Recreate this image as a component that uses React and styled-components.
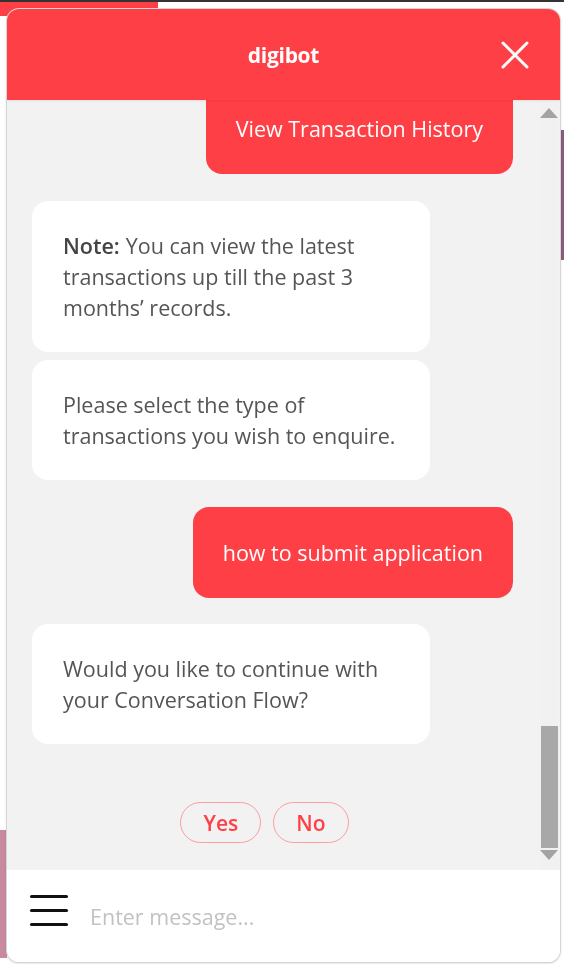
import React from 'react';
import styled, { createGlobalStyle } from 'styled-components';

const red = '#fe4046';

const GlobalStyle = createGlobalStyle`
  html, body {
    margin: 0;
    padding: 0;
    background: #fff;
    font-family: "Open Sans", "Liberation Sans", sans-serif;
  }
`;

const Backdrop = styled.div`
  height: 964px;
  overflow: hidden;
  display: flex;
  flex-direction: column;
`;

const TopLine = styled.div`
  height: 2px;
  background: #333;
`;

const RedTab = styled.div`
  width: 158px;
  height: 14px;
  background: ${red};
`;

const Sides = styled.div`
  flex: 1;
  display: flex;
  justify-content: space-between;
`;

const Strip = styled.div`
  width: ${p => p.$w}px;
  height: ${p => p.$h}px;
  margin-top: ${p => p.$top}px;
  background: ${p => p.$color};
`;

const ChatWindow = styled.div`
  position: fixed;
  top: 9px;
  left: 7px;
  width: 553px;
  height: 953px;
  display: flex;
  flex-direction: column;
  border-radius: 12px;
  overflow: hidden;
  box-shadow: 0 0 0 1px #d6d6d6, 0 1px 3px rgba(0, 0, 0, 0.25);
  background: #f2f2f2;
`;

const Header = styled.div`
  height: 91px;
  flex-shrink: 0;
  background: ${red};
  display: flex;
  align-items: center;
  justify-content: center;
  position: relative;
  z-index: 1;
  box-shadow: 0 1px 2px rgba(0, 0, 0, 0.08);
`;

const Title = styled.div`
  color: #fff;
  font-size: 21px;
  font-weight: 700;
  letter-spacing: -0.3px;
`;

const CloseButton = styled.button`
  position: absolute;
  right: 30px;
  top: 31px;
  width: 30px;
  height: 30px;
  padding: 0;
  border: none;
  background: none;
  display: flex;
  align-items: center;
  justify-content: center;
`;

const Body = styled.div`
  flex: 1;
  display: flex;
  min-height: 0;
`;

const MessageList = styled.div`
  flex: 1;
  overflow: hidden;
  display: flex;
  flex-direction: column;
  justify-content: flex-end;
  padding: 0 27px 27px 25px;
`;

const Bubble = styled.div`
  flex-shrink: 0;
  font-size: 21.5px;
  line-height: 31px;
  border-radius: 16px;
  margin-top: ${p => p.$gap}px;
  ${p => p.$user ? `
    align-self: flex-end;
    background: ${red};
    color: #fff;
    padding: 30px 30px;
  ` : `
    align-self: flex-start;
    width: 398px;
    box-sizing: border-box;
    background: #fff;
    color: #555;
    padding: 29px 31px;
  `}
`;

const Label = styled.strong`
  font-weight: 600;
  color: #444;
  margin-right: 6px;
`;

const Choices = styled.div`
  flex-shrink: 0;
  margin-top: 58px;
  display: flex;
  justify-content: center;
  gap: 12px;
  padding-right: 16px;
`;

const Choice = styled.button`
  height: 41px;
  padding: 0 22px;
  border-radius: 21px;
  border: 1px solid #ff9c9e;
  background: transparent;
  color: ${red};
  font-family: inherit;
  font-size: 21px;
  font-weight: 600;
`;

const Rail = styled.div`
  width: 18px;
  margin-right: 2px;
  display: flex;
  flex-direction: column;
  align-items: center;
  background: #f1f1f1;
`;

const Arrow = styled.div`
  width: 0;
  height: 0;
  border-left: 9px solid transparent;
  border-right: 9px solid transparent;
  ${p => p.$down
    ? 'border-top: 10px solid #a3a3a3; margin-bottom: 10px;'
    : 'border-bottom: 10px solid #a3a3a3; margin-top: 8px;'}
`;

const Thumb = styled.div`
  margin-top: auto;
  width: 17px;
  height: 122px;
  background: #a8a8a8;
  margin-bottom: 2px;
`;

const Composer = styled.div`
  height: 92px;
  flex-shrink: 0;
  background: #fff;
  display: flex;
  align-items: center;
  padding-left: 23px;
  gap: 22px;
`;

const Burger = styled.div`
  width: 38px;
  display: flex;
  flex-direction: column;
  gap: 11px;
  margin-top: -12px;
  span {
    height: 3px;
    border-radius: 2px;
    background: #111;
  }
`;

const Input = styled.input`
  flex: 1;
  border: none;
  outline: none;
  background: transparent;
  font-family: inherit;
  font-size: 21.5px;
  color: #333;
  padding: 0;
  &::placeholder {
    color: #c2c2c2;
  }
`;

export default function App() {
  return (
    <>
      <GlobalStyle />
      <Backdrop>
        <TopLine />
        <RedTab />
        <Sides>
          <Strip $w={7} $h={128} $top={814} $color="#c98a9f" />
          <Strip $w={4} $h={130} $top={114} $color="#8c5c7c" />
        </Sides>
      </Backdrop>
      <ChatWindow>
        <Header>
          <Title>digibot</Title>
          <CloseButton aria-label="close">
            <svg width="28" height="28" viewBox="0 0 28 28">
              <path d="M2 2L26 26M26 2L2 26" stroke="#fff" strokeWidth="3" strokeLinecap="round" />
            </svg>
          </CloseButton>
        </Header>
        <Body>
          <MessageList>
            <Bubble $user $gap={0}>View Transaction History</Bubble>
            <Bubble $gap={27}>
              <Label>Note:</Label>You can view the latest transactions up till the past 3 months’ records.
            </Bubble>
            <Bubble $gap={8}>Please select the type of transactions you wish to enquire.</Bubble>
            <Bubble $user $gap={27}>how to submit application</Bubble>
            <Bubble $gap={26}>Would you like to continue with your Conversation Flow?</Bubble>
            <Choices>
              <Choice>Yes</Choice>
              <Choice>No</Choice>
            </Choices>
          </MessageList>
          <Rail>
            <Arrow />
            <Thumb />
            <Arrow $down />
          </Rail>
        </Body>
        <Composer>
          <Burger>
            <span />
            <span />
            <span />
          </Burger>
          <Input placeholder="Enter message..." />
        </Composer>
      </ChatWindow>
    </>
  );
}
